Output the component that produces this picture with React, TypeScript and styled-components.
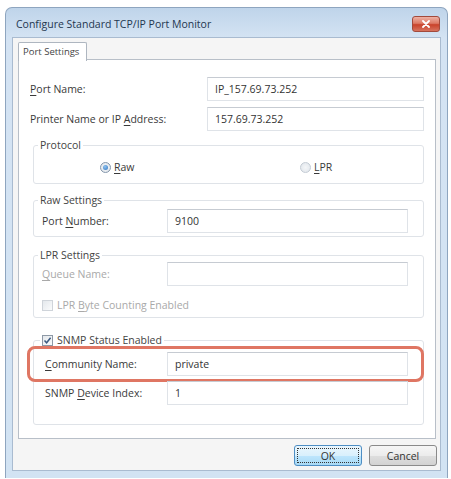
import React from "react";
import styled, { createGlobalStyle } from "styled-components";

const GlobalStyle = createGlobalStyle`
  html, body {
    margin: 0;
    padding: 0;
    background: #fff;
  }
  body {
    font-family: "Open Sans", "Noto Sans", sans-serif;
    font-size: 10.5px;
    color: #3a3a3a;
  }
`;

const Page = styled.div`
  padding: 7px 0 0 5px;
`;

const Window = styled.div`
  width: 443px;
  height: 471px;
  box-sizing: border-box;
  border: 1px solid #8ea5bf;
  border-bottom: none;
  border-radius: 7px 7px 0 0;
  background: linear-gradient(180deg, #bfd4ea 0px, #d4e3f3 30px, #d2e3f3 100%);
  display: flex;
  flex-direction: column;
`;

const TitleBar = styled.div`
  height: 29px;
  box-sizing: border-box;
  padding: 3px 7px 0 10px;
  display: flex;
  align-items: center;
  justify-content: space-between;
`;

const Title = styled.span`
  font-size: 10.5px;
  color: #23364f;
`;

const CloseButton = styled.div`
  width: 28px;
  height: 16px;
  border-radius: 3px;
  border: 1px solid #a24a3c;
  box-sizing: border-box;
  background: linear-gradient(180deg, #eeb1a4 0%, #dd7a65 45%, #c9432b 55%, #d7735e 100%);
  display: flex;
  align-items: center;
  justify-content: center;
`;

const Client = styled.div`
  flex: 1;
  margin: 0 6px 7px 6px;
  border: 1px solid #a9bbd0;
  background: #f5f5f5;
  padding: 4px 4px 0 5px;
  display: flex;
  flex-direction: column;
`;

const TabStrip = styled.div`
  display: flex;
  height: 18px;
  position: relative;
  z-index: 1;
  margin-bottom: -1px;
`;

const Tab = styled.div`
  width: 69px;
  height: 19px;
  box-sizing: border-box;
  border: 1px solid #aeb6c0;
  border-bottom: none;
  border-radius: 2px 2px 0 0;
  background: #fff;
  font-size: 9.5px;
  color: #444;
  padding: 2px 0 0 4px;
`;

const Panel = styled.div`
  height: 380px;
  box-sizing: border-box;
  border: 1px solid #b8bfc8;
  background: #fff;
  padding: 17px 11px 0 11px;
  display: flex;
  flex-direction: column;
`;

const FormRow = styled.div<{ $cols: number; $top?: number; $indent?: number }>`
  display: grid;
  grid-template-columns: ${(p) => p.$cols}px 1fr;
  align-items: center;
  height: 24px;
  margin-top: ${(p) => p.$top ?? 0}px;
  padding-left: ${(p) => p.$indent ?? 0}px;
  position: relative;
`;

const Label = styled.span<{ $disabled?: boolean }>`
  color: ${(p) => (p.$disabled ? "#a9a9a9" : "#3a3a3a")};
  white-space: nowrap;
`;

const Key = styled.u`
  text-decoration-thickness: 1px;
  text-underline-offset: 2px;
`;

const Field = styled.div`
  height: 24px;
  box-sizing: border-box;
  border: 1px solid #dfe3e8;
  border-top-color: #c6cbd2;
  background: #fff;
  padding: 0 7px;
  display: flex;
  align-items: center;
  color: #333;
`;

const GroupBox = styled.fieldset<{ $top: number; $bottom: number }>`
  margin: ${(p) => p.$top}px 0 0 3px;
  padding: 0 15px ${(p) => p.$bottom}px 8px;
  border: 1px solid #dfe3e8;
  border-radius: 3px;
  min-width: 0;
`;

const Legend = styled.legend<{ $shift?: number }>`
  padding: 0 2px;
  margin-left: ${(p) => p.$shift ?? -4}px;
  line-height: 14px;
  color: #444;
  display: flex;
  align-items: center;
  gap: 4px;
`;

const RadioRow = styled.div`
  display: grid;
  grid-template-columns: 200px auto;
  padding-left: 58px;
  margin-top: 7px;
  height: 16px;
  align-items: center;
`;

const RadioOption = styled.label`
  display: flex;
  align-items: center;
  gap: 3px;
`;

const RadioDot = styled.span<{ $checked?: boolean }>`
  width: 11px;
  height: 11px;
  box-sizing: border-box;
  border-radius: 50%;
  border: 1px solid ${(p) => (p.$checked ? "#8396ab" : "#c3cbd4")};
  background: radial-gradient(circle, #f4f6f8 0%, #dfe4ea 100%);
  display: flex;
  align-items: center;
  justify-content: center;
  &::after {
    content: "";
    display: ${(p) => (p.$checked ? "block" : "none")};
    width: 5px;
    height: 5px;
    border-radius: 50%;
    background: radial-gradient(circle at 40% 35%, #8fc3f0 0%, #2f74c0 100%);
  }
`;

const CheckRow = styled.div<{ $top?: number }>`
  display: flex;
  align-items: center;
  gap: 4px;
  height: 14px;
  margin-top: ${(p) => p.$top ?? 0}px;
`;

const CheckBox = styled.span<{ $disabled?: boolean }>`
  width: 11px;
  height: 11px;
  box-sizing: border-box;
  border: 1px solid ${(p) => (p.$disabled ? "#cfd4da" : "#8e99a6")};
  background: linear-gradient(135deg, #e4e8ec 0%, #fafbfc 100%);
  display: flex;
  align-items: center;
  justify-content: center;
`;

const Highlight = styled.div`
  position: absolute;
  top: -6px;
  bottom: -6px;
  left: -15px;
  right: -16px;
  border: 3.5px solid #df7663;
  border-radius: 8px;
  pointer-events: none;
`;

const Footer = styled.div`
  display: flex;
  justify-content: flex-end;
  gap: 7px;
  padding-top: 6px;
  margin-right: -1px;
`;

const Button = styled.button<{ $default?: boolean }>`
  width: 68px;
  height: 21px;
  border-radius: 3px;
  border: 1px solid ${(p) => (p.$default ? "#4e8ec4" : "#8a8a8a")};
  background: ${(p) =>
    p.$default
      ? "linear-gradient(180deg, #eaf6fd 0%, #d9f0fc 50%, #bee6fd 51%, #a7d9f5 100%)"
      : "linear-gradient(180deg, #f6f6f6 0%, #ececec 50%, #dedede 51%, #d2d2d2 100%)"};
  font-family: inherit;
  font-size: 10.5px;
  color: #333;
  padding: 0;
  outline: ${(p) => (p.$default ? "1px dotted #333" : "none")};
  outline-offset: -4px;
`;

const CheckMark = () => (
  <svg width="9" height="9" viewBox="0 0 9 9">
    <path d="M1.5 4.6 L3.6 6.8 L7.6 1.8" fill="none" stroke="#3c5a80" strokeWidth="1.5" />
  </svg>
);

export default function App() {
  return (
    <>
      <GlobalStyle />
      <Page>
        <Window>
          <TitleBar>
            <Title>Configure Standard TCP/IP Port Monitor</Title>
            <CloseButton>
              <svg width="10" height="8" viewBox="0 0 10 8">
                <path d="M2 1 L8 7 M8 1 L2 7" stroke="#fff" strokeWidth="1.8" strokeLinecap="round" />
              </svg>
            </CloseButton>
          </TitleBar>
          <Client>
            <TabStrip>
              <Tab>Port Settings</Tab>
            </TabStrip>
            <Panel>
              <FormRow $cols={177}>
                <Label>
                  <Key>P</Key>ort Name:
                </Label>
                <Field>IP_157.69.73.252</Field>
              </FormRow>
              <FormRow $cols={177} $top={6}>
                <Label>
                  Printer Name or IP <Key>A</Key>ddress:
                </Label>
                <Field>157.69.73.252</Field>
              </FormRow>

              <GroupBox $top={7} $bottom={8}>
                <Legend>Protocol</Legend>
                <RadioRow>
                  <RadioOption>
                    <RadioDot $checked />
                    <span>
                      <Key>R</Key>aw
                    </span>
                  </RadioOption>
                  <RadioOption>
                    <RadioDot />
                    <span>
                      <Key>L</Key>PR
                    </span>
                  </RadioOption>
                </RadioRow>
              </GroupBox>

              <GroupBox $top={9} $bottom={3}>
                <Legend>Raw Settings</Legend>
                <FormRow $cols={125} $top={2}>
                  <Label>
                    Port <Key>N</Key>umber:
                  </Label>
                  <Field>9100</Field>
                </FormRow>
              </GroupBox>

              <GroupBox $top={11} $bottom={5}>
                <Legend>LPR Settings</Legend>
                <FormRow $cols={125} $top={0}>
                  <Label $disabled>
                    <Key>Q</Key>ueue Name:
                  </Label>
                  <Field />
                </FormRow>
                <CheckRow $top={12}>
                  <CheckBox $disabled />
                  <Label $disabled>
                    LPR <Key>B</Key>yte Counting Enabled
                  </Label>
                </CheckRow>
              </GroupBox>

              <GroupBox $top={15} $bottom={19}>
                <Legend $shift={-2}>
                  <CheckBox>
                    <CheckMark />
                  </CheckBox>
                  <span>
                    <Key>S</Key>NMP Status Enabled
                  </span>
                </Legend>
                <FormRow $cols={122} $indent={3} $top={5}>
                  <Label>
                    <Key>C</Key>ommunity Name:
                  </Label>
                  <Field>private</Field>
                  <Highlight />
                </FormRow>
                <FormRow $cols={122} $indent={3} $top={5}>
                  <Label>
                    SNMP <Key>D</Key>evice Index:
                  </Label>
                  <Field>1</Field>
                </FormRow>
              </GroupBox>
            </Panel>
            <Footer>
              <Button $default>OK</Button>
              <Button>Cancel</Button>
            </Footer>
          </Client>
        </Window>
      </Page>
    </>
  );
}
